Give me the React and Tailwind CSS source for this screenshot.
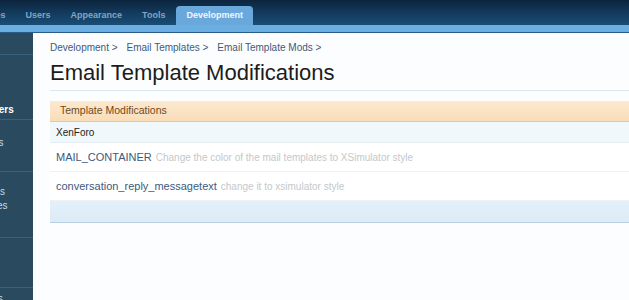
import React from "react";

const font = { fontFamily: '"Liberation Sans", Arial, sans-serif' };

function TopNav() {
  const tabs = ["Nodes", "Users", "Appearance", "Tools"];
  return (
    <header className="w-full">
      <div className="h-[25px] bg-gradient-to-b from-[#0c243d] via-[#133a5c] to-[#1a4d76] flex items-end text-[9px] font-bold">
        <div className="flex items-end h-[19px] ml-[-22px] gap-[20px]">
          {tabs.map((t) => (
            <span key={t} className="h-full flex items-center text-[#7ea6c8]">
              {t}
            </span>
          ))}
          <span className="ml-[-9px] px-[10px] h-full flex items-center rounded-t-[4px] bg-[#6aa8dc] text-[#eef6fd]">
            Development
          </span>
        </div>
      </div>
      <div className="h-[8px] bg-[#6aaee2] border-b border-[#2b5c85]" />
    </header>
  );
}

function Sidebar() {
  return (
    <aside className="w-[33px] shrink-0 bg-[#294a5f] text-[10px] text-[#c9d9e4] overflow-hidden whitespace-nowrap">
      <div className="h-[22px] border-b border-[#3a627d]" />
      <div className="h-[65px] border-b border-[#3a627d] flex flex-col justify-end pb-[2px]">
        <span className="ml-[-14px] font-bold text-white">Users</span>
      </div>
      <div className="h-[52px] border-b border-[#3a627d] pt-[15px]">
        <span className="ml-[-31px]">Options</span>
      </div>
      <div className="h-[66px] border-b border-[#3a627d] pt-[13px] leading-[14px]">
        <div className="ml-[-25px]">Emails</div>
        <div className="ml-[-38px]">Templates</div>
      </div>
      <div className="h-[50px] border-b border-[#3a627d]" />
      <div className="pt-[3px]">
        <span className="ml-[-20px]">Stats</span>
      </div>
    </aside>
  );
}

function ModRow({ title, desc }) {
  return (
    <div className="h-[29px] flex items-center px-[6px] bg-white border-b border-[#edf2f6] whitespace-nowrap">
      <span className="text-[11px] text-[#3d5a80]">{title}</span>
      <span className="ml-[4px] text-[10px] text-[#c4c8cc]">{desc}</span>
    </div>
  );
}

export default function App() {
  return (
    <div className="w-[629px] h-[300px] overflow-hidden bg-white flex flex-col" style={font}>
      <TopNav />
      <div className="flex flex-1 min-h-0">
        <Sidebar />
        <main className="flex-1 bg-[#fcfdfe] pl-[17px]">
          <nav className="mt-[8px] text-[10px] leading-[14px] text-[#3f5a7a] flex gap-[9px] whitespace-nowrap">
            <span>Development &gt;</span>
            <span>Email Templates &gt;</span>
            <span>Email Template Mods &gt;</span>
          </nav>
          <h1 className="mt-[5px] text-[22px] leading-[26px] text-[#1c1c1c] whitespace-nowrap">
            Email Template Modifications
          </h1>
          <div className="mt-[4px] border-b border-[#dbe8f0]" />
          <section className="mt-[10px]">
            <div className="h-[21px] flex items-center pl-[10px] bg-gradient-to-b from-[#fde9cf] to-[#f9ddb9] border-b border-[#f0c58f] text-[10.5px] text-[#6b4a21]">
              Template Modifications
            </div>
            <div className="h-[21px] flex items-center pl-[6px] bg-[#f1f8fc] border-b border-[#e4eef4] text-[10px] text-[#222]">
              XenForo
            </div>
            <ModRow title="MAIL_CONTAINER" desc="Change the color of the mail templates to XSimulator style" />
            <ModRow title="conversation_reply_messagetext" desc="change it to xsimulator style" />
            <div className="h-[22px] bg-gradient-to-b from-[#e3f0fa] to-[#dcebf7] border-b border-[#b9cfe0]" />
          </section>
        </main>
      </div>
    </div>
  );
}
